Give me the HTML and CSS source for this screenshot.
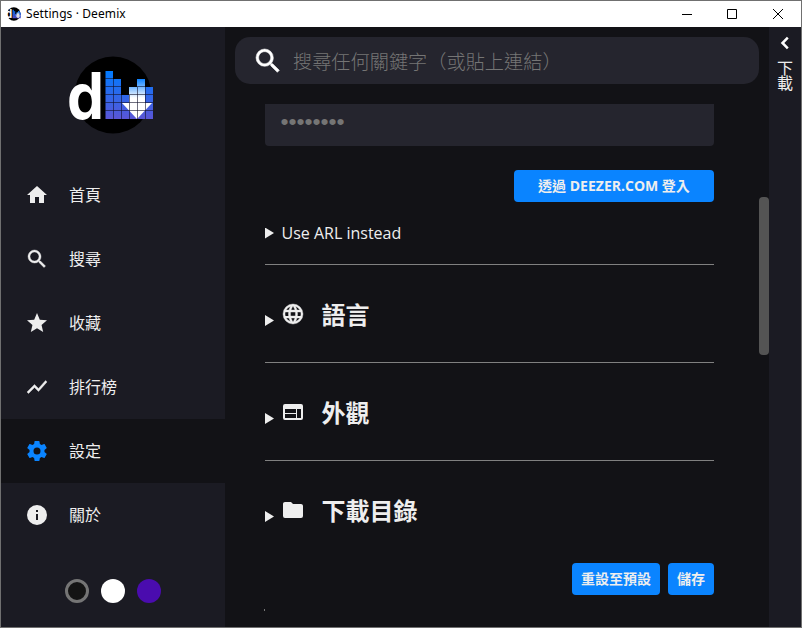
FILE: index.html
```html
<!DOCTYPE html>
<html lang="zh-Hant">
<head>
<meta charset="utf-8">
<title>Settings · Deemix</title>
<link rel="stylesheet" href="styles.css">
</head>
<body>
<svg width="0" height="0" class="defs">
  <defs>
    <linearGradient id="bars" gradientUnits="userSpaceOnUse" x1="0" y1="15" x2="0" y2="63"><stop offset="0" stop-color="#007bff"/><stop offset="1" stop-color="#5a55d6"/></linearGradient>
    <linearGradient id="arrow" gradientUnits="userSpaceOnUse" x1="0" y1="22" x2="0" y2="42"><stop offset="0" stop-color="#007bff"/><stop offset="1" stop-color="#fff"/></linearGradient>
    <symbol id="logo" viewBox="0 0 86 78">
      <circle cx="45" cy="39" r="38.5" fill="#000"/>
      <text x="-1" y="62.500" class="logo-letter" textLength="37" lengthAdjust="spacingAndGlyphs">d</text>
      <path fill="url(#bars)" d="M37.500 15h7.500v8h8v16h8v-8h8v-8h8v8h8v32H37.500z"/>
      <path fill="url(#arrow)" d="M61 31h8v-8h8v24h7L69 63 54 47h7z"/>
      <path stroke="#10102a" stroke-opacity=".6" fill="none" d="M37 22.5h8M37 30.500h16M69 30.500h8M37 38.500h16M61 38.500h24M37 46.500h48M37 54.500h48M45.500 23v40M53.500 39v24M61.500 39v24M69.500 31v32M77.500 31v32"/>
    </symbol>
    <symbol id="magnify" viewBox="0 0 24 24"><path d="M9.500 3A6.500 6.500 0 0 1 16 9.500c0 1.610-.59 3.090-1.560 4.230l.27.27h.79l5 5-1.500 1.500-5-5v-.79l-.27-.27A6.516 6.516 0 0 1 9.500 16a6.500 6.500 0 0 1 0-13m0 2C7 5 5 7 5 9.500S7 14 9.500 14 14 12 14 9.500 12 5 9.500 5z"/></symbol>
  </defs>
</svg>
<div class="window">
  <header class="titlebar">
    <svg class="app-icon"><use href="#logo"/></svg>
    <span class="title">Settings · Deemix</span>
    <svg class="controls" width="104" height="12" viewBox="0 0 104 12" fill="none" stroke="#000"><path d="M1 6.500h10M46.500 1.500h9v9h-9z"/><path d="M92 1l10 10M102 1L92 11"/></svg>
  </header>
  <div class="app">
    <aside class="sidebar">
      <svg class="logo"><use href="#logo"/></svg>
      <nav>
        <a class="item"><svg class="icon" viewBox="0 0 24 24"><path d="M10 20v-6h4v6h5v-8h3L12 3 2 12h3v8z"/></svg>首頁</a>
        <a class="item"><svg class="icon bold"><use href="#magnify"/></svg>搜尋</a>
        <a class="item"><svg class="icon" viewBox="0 0 24 24"><path d="M12 17.270L18.180 21l-1.640-7.030L22 9.240l-7.190-.61L12 2 9.190 8.630 2 9.240l5.460 4.730L5.820 21z"/></svg>收藏</a>
        <a class="item"><svg class="icon bold" viewBox="0 0 24 24"><path d="M3.500 18.490l6-6.010 4 4L22 6.920l-1.410-1.410-7.090 7.970-4-4L2 16.990z"/></svg>排行榜</a>
        <a class="item active"><svg class="icon" viewBox="0 0 24 24"><path d="M12 15.500A3.500 3.500 0 0 1 8.500 12 3.500 3.500 0 0 1 12 8.500a3.500 3.500 0 0 1 3.500 3.500 3.500 3.500 0 0 1-3.500 3.500m7.430-2.530c.04-.32.07-.64.07-.97s-.03-.66-.07-1l2.110-1.630c.19-.15.24-.42.12-.64l-2-3.460c-.12-.22-.39-.31-.61-.22l-2.490 1c-.52-.39-1.060-.73-1.690-.98l-.37-2.650A.506.506 0 0 0 14 2h-4c-.25 0-.46.18-.5.420l-.37 2.650c-.63.250-1.170.590-1.690.980l-2.490-1c-.22-.09-.49 0-.61.220l-2 3.460c-.13.220-.07.490.12.640L4.570 11c-.04.340-.07.670-.07 1s.03.650.07.970l-2.110 1.660c-.19.150-.25.420-.12.640l2 3.460c.12.220.39.300.61.220l2.490-1.010c.52.400 1.060.740 1.690.990l.37 2.650c.04.240.25.420.5.420h4c.25 0 .46-.18.5-.42l.37-2.650c.63-.26 1.170-.59 1.690-.99l2.490 1.010c.22.080.49 0 .61-.22l2-3.460c.12-.22.07-.49-.12-.64z"/></svg>設定</a>
        <a class="item"><svg class="icon" viewBox="0 0 24 24"><path d="M13 9h-2V7h2m0 10h-2v-6h2m-1-9a10 10 0 1 0 0 20 10 10 0 0 0 0-20z"/></svg>關於</a>
      </nav>
      <div class="themes"><i class="theme dark"></i><i class="theme light"></i><i class="theme purple"></i></div>
    </aside>
    <main class="content">
      <div class="search"><svg class="search-icon"><use href="#magnify"/></svg><span>搜尋任何關鍵字（或貼上連結）</span></div>
      <div class="view">
        <div class="settings">
          <div class="password">••••••••</div>
          <button class="btn login">透過 DEEZER.COM 登入</button>
          <div class="arl"><i class="marker"></i>Use ARL instead</div>
          <section class="group"><i class="marker"></i><svg class="icon bold" viewBox="0 0 24 24"><path d="M16.360 14c.08-.66.14-1.320.14-2s-.06-1.340-.14-2h3.380c.16.640.26 1.310.26 2s-.1 1.360-.26 2m-5.150 5.560c.6-1.110 1.060-2.310 1.380-3.560h2.950a8.030 8.030 0 0 1-4.330 3.560M14.340 14H9.660c-.1-.66-.16-1.320-.16-2s.06-1.350.16-2h4.680c.09.650.16 1.320.16 2s-.07 1.340-.16 2M12 19.960c-.83-1.200-1.500-2.530-1.910-3.960h3.820c-.41 1.430-1.080 2.760-1.910 3.960M8 8H5.080A7.923 7.923 0 0 1 9.400 4.440C8.800 5.550 8.350 6.750 8 8m-2.920 8H8c.35 1.250.8 2.450 1.400 3.560A8.008 8.008 0 0 1 5.080 16m-.82-2C4.100 13.360 4 12.690 4 12s.1-1.360.26-2h3.380c-.08.660-.14 1.320-.14 2s.06 1.340.14 2M12 4.030c.83 1.200 1.500 2.540 1.910 3.970h-3.820c.41-1.430 1.080-2.770 1.910-3.970M18.920 8h-2.950a15.650 15.650 0 0 0-1.380-3.560c1.840.63 3.370 1.900 4.330 3.560M12 2a10 10 0 1 0 0 20 10 10 0 0 0 0-20z"/></svg><h2>語言</h2></section>
          <section class="group"><i class="marker"></i><svg class="icon" viewBox="0 0 24 24"><path fill-rule="evenodd" d="M20 4H4a2 2 0 0 0-2 2v12a2 2 0 0 0 2 2h16a2 2 0 0 0 2-2V6a2 2 0 0 0-2-2zM15 18H4v-4h11zM15 13H4V9h11zM20 18h-4V9h4z"/></svg><h2>外觀</h2></section>
          <section class="group"><i class="marker"></i><svg class="icon" viewBox="0 0 24 24"><path d="M10 4H4c-1.110 0-2 .89-2 2v12a2 2 0 0 0 2 2h16a2 2 0 0 0 2-2V8c0-1.110-.9-2-2-2h-8z"/></svg><h2>下載目錄</h2></section>
          <footer class="actions"><button class="btn reset">重設至預設</button><button class="btn save">儲存</button></footer>
          <div class="speck"></div>
        </div>
        <div class="track"><div class="thumb"></div></div>
      </div>
    </main>
    <aside class="downloads">
      <svg width="12" height="16" viewBox="0 0 12 16" fill="none" stroke="#fff" stroke-width="2.500"><path d="M8.800 2.700L3.500 8l5.300 5.300"/></svg>
      <div class="vertical">下載</div>
    </aside>
  </div>
</div>
</body>
</html>
```

FILE: styles.css
```css
* { box-sizing: border-box; }
body { margin: 0; font: 16px/24px "Open Sans", "Noto Sans CJK TC", sans-serif; color: #eee; }
.defs { position: absolute; }
.window { width: 802px; height: 628px; border: 1px solid #707070; display: flex; flex-direction: column; overflow: hidden; background: #121216; }
.titlebar { height: 26px; flex: none; background: #fff; color: #000; display: flex; align-items: center; padding: 0 16px 0 5px; font: 12px/16px "Noto Sans", sans-serif; }
.app-icon { width: 15px; height: 14px; margin-right: 5px; }
.title { letter-spacing: .1px; }
.controls { margin-left: auto; margin-top: -1px; }
.app { flex: 1; display: flex; min-height: 0; }
.sidebar { width: 224px; background: #1b1b23; flex: none; }
.logo { display: block; width: 86px; height: 78px; margin: 29px 0 29px 67px; }
.logo-letter { font: bold 64px Inter, "Liberation Sans", sans-serif; fill: #fff; }
.item { height: 64px; display: flex; align-items: center; padding-left: 24px; gap: 20px; }
.icon { width: 24px; height: 24px; fill: #eee; flex: none; }
.bold { stroke: #eee; stroke-width: .4; }
.active { background: #121216; }
.active .icon { fill: #0a84ff; }
.themes { display: flex; gap: 12px; padding: 32px 0 0 64px; }
.theme { width: 24px; height: 24px; border-radius: 50%; }
.dark { background: #141414; border: 3px solid #757575; }
.light { background: #fff; }
.purple { background: #4a0cae; }
.content { width: 544px; display: flex; flex-direction: column; flex: none; padding-top: 10px; }
.search { height: 47px; margin: 0 10px 20px; border-radius: 15px; background: #25252e; display: flex; align-items: center; padding-left: 17px; gap: 9px; color: #757575; font-size: 19.2px; font-weight: 300; }
.search span { padding-top: 2px; }
.search-icon { width: 32px; height: 32px; fill: #fff; stroke: #fff; stroke-width: .4; }
.view { flex: 1; display: flex; min-height: 0; }
.settings { width: 449px; margin-left: 40px; display: flex; flex-direction: column; }
.password { height: 42px; flex: none; background: #25252e; border-radius: 0 0 4px 4px; padding: 5px 15.5px; color: #757575; font: 22.900px/24px "Liberation Sans", sans-serif; }
.btn { height: 32px; border: 0; border-radius: 4px; background: #0a84ff; color: #eee; font: bold 14px/20px "Open Sans", "Noto Sans CJK TC", sans-serif; padding: 0; white-space: nowrap; }
.login { width: 200px; margin: 24px 0 19px; align-self: flex-end; flex: none; }
.arl { height: 24px; display: flex; align-items: center; gap: 7.5px; }
.marker { width: 9px; height: 11px; background: #eee; clip-path: polygon(0 0, 100% 50%, 0 100%); flex: none; }
.group { border-top: 1px solid #808080; height: 98px; flex: none; display: flex; padding-top: 37px; }
.arl + .group { margin-top: 19px; }
.group .marker { margin: 13px 8px 0 0; }
.group .icon { margin-left: -1px; }
h2 { margin: -3px 0 0 16.5px; font: bold 24px/32px "Open Sans", "Noto Sans CJK TC", sans-serif; }
.actions { display: flex; justify-content: flex-end; gap: 8px; margin-top: 5px; }
.reset { width: 88px; }
.save { width: 46px; }
.speck { width: 1px; height: 2px; margin: 14px 0 0 -1px; background: #777; }
.track { width: 10px; margin-left: auto; padding-top: 93px; }
.thumb { height: 158px; border-radius: 4px; background: #545454; }
.downloads { width: 32px; background: #1b1b23; display: flex; flex-direction: column; align-items: center; padding-top: 8px; }
.vertical { writing-mode: vertical-rl; line-height: 20px; margin: 9px 2px 0 0; letter-spacing: -1px; }
```
